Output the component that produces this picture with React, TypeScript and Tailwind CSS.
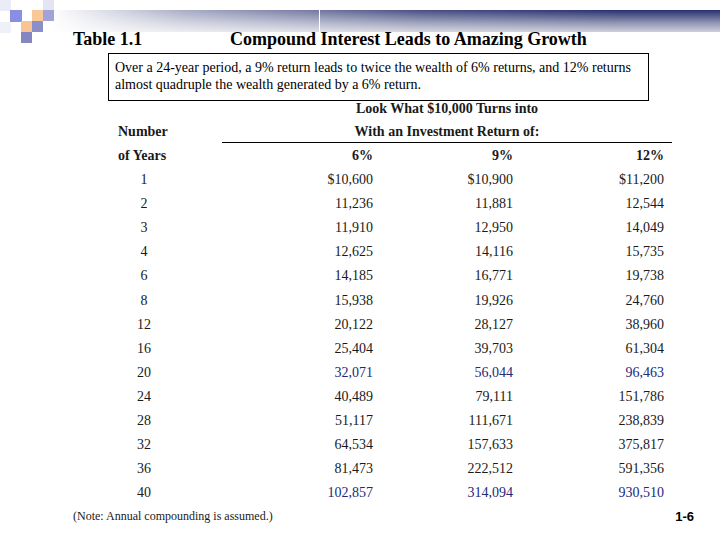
import React from "react";

// rows of the compound growth table
const rows = [
  { years: "1", a: "$10,600", b: "$10,900", c: "$11,200" },
  { years: "2", a: "11,236", b: "11,881", c: "12,544" },
  { years: "3", a: "11,910", b: "12,950", c: "14,049" },
  { years: "4", a: "12,625", b: "14,116", c: "15,735" },
  { years: "6", a: "14,185", b: "16,771", c: "19,738" },
  { years: "8", a: "15,938", b: "19,926", c: "24,760" },
  { years: "12", a: "20,122", b: "28,127", c: "38,960" },
  { years: "16", a: "25,404", b: "39,703", c: "61,304" },
  { years: "20", a: "32,071", b: "56,044", c: "96,463", blue: true },
  { years: "24", a: "40,489", b: "79,111", c: "151,786" },
  { years: "28", a: "51,117", b: "111,671", c: "238,839" },
  { years: "32", a: "64,534", b: "157,633", c: "375,817" },
  { years: "36", a: "81,473", b: "222,512", c: "591,356" },
  { years: "40", a: "102,857", b: "314,094", c: "930,510", blue: true },
];

function Logo() {
  return (
    <svg width="56" height="44" viewBox="0 0 56 44" className="absolute left-0 top-0">
      <rect x="0" y="0" width="11" height="11" fill="#ececf6" />
      <rect x="43" y="0" width="11" height="10" fill="#e4e4f2" />
      <rect x="0" y="22" width="11" height="11" fill="#f0f0f8" />
      <rect x="10" y="10" width="12" height="12" fill="#8a8ee2" />
      <rect x="32" y="10" width="11" height="11" fill="#f8c898" />
      <rect x="43" y="10" width="11" height="11" fill="#a0a2d8" />
      <rect x="21" y="21" width="11" height="11" fill="#f8c494" />
      <rect x="32" y="21" width="11" height="11" fill="#8c8ec8" />
      <rect x="21" y="32" width="11" height="11" fill="#8486c2" />
    </svg>
  );
}

function HeaderBand() {
  return (
    <div className="relative h-[32px] pt-[10px]">
      <div className="relative ml-[50px] h-[22px] bg-[linear-gradient(to_bottom,#283070,#8a90ae_55%,#d0d0dc)]">
        <div className="absolute inset-0 bg-[linear-gradient(to_right,#ffffff,rgba(255,255,255,0.6)_20%,rgba(255,255,255,0.15)_55%,rgba(255,255,255,0)_85%)]" />
        <div className="absolute left-[269px] top-0 h-full w-px bg-white" />
      </div>
      <Logo />
    </div>
  );
}

export default function App() {
  return (
    <div className="w-[720px] h-[540px] bg-white overflow-hidden text-[#1a1a1a] font-['Liberation_Serif',serif]">
      <HeaderBand />

      {/* Title */}
      <div className="grid grid-cols-[157px_auto] pl-[73px] h-[20px] text-[18px] leading-[14px] font-bold text-black">
        <span>Table 1.1</span>
        <span>Compound Interest Leads to Amazing Growth</span>
      </div>

      {/* Summary box */}
      <div className="ml-[108px] mt-px w-[541px] h-[48px] border border-black px-[6px] pt-[5px] text-[14px] leading-[17px] text-black">
        <p>Over a 24-year period, a 9% return leads to twice the wealth of 6% returns, and 12% returns</p>
        <p>almost quadruple the wealth generated by a 6% return.</p>
      </div>

      {/* Column headings */}
      <div className="pl-[222px] h-[14px]">
        <div className="w-[450px] text-center text-[14px] leading-[16px] font-bold">
          Look What $10,000 Turns into
        </div>
      </div>
      <div className="flex h-[28px] text-[14px] font-bold">
        <div className="w-[222px] pl-[118px] pt-[7px] leading-[20px]">Number</div>
        <div className="w-[450px] pt-[7px] leading-[20px] text-center border-b border-black">
          With an Investment Return of:
        </div>
      </div>

      {/* Table */}
      <div className="pl-[118px] mt-px grid grid-cols-[54px_201px_140px_151px] auto-rows-[24.1px] text-[14px] leading-[24px]">
        <div className="font-bold whitespace-nowrap">of Years</div>
        <div className="font-bold text-right">6%</div>
        <div className="font-bold text-right">9%</div>
        <div className="font-bold text-right">12%</div>
        {rows.map((r) => (
          <React.Fragment key={r.years}>
            <div className="text-center pr-[2px]">{r.years}</div>
            <div className={`text-right ${r.blue ? "text-[#22287a]" : ""}`}>{r.a}</div>
            <div className={`text-right ${r.blue ? "text-[#22287a]" : ""}`}>{r.b}</div>
            <div className={`text-right ${r.blue ? "text-[#22287a]" : ""}`}>{r.c}</div>
          </React.Fragment>
        ))}
      </div>

      {/* Footer */}
      <div className="flex items-center h-[22px] pl-[73px] pr-[26px]">
        <span className="text-[12px]">(Note: Annual compounding is assumed.)</span>
        <span className="ml-auto text-[13px] font-bold text-black font-['Liberation_Sans',sans-serif]">1-6</span>
      </div>
    </div>
  );
}
